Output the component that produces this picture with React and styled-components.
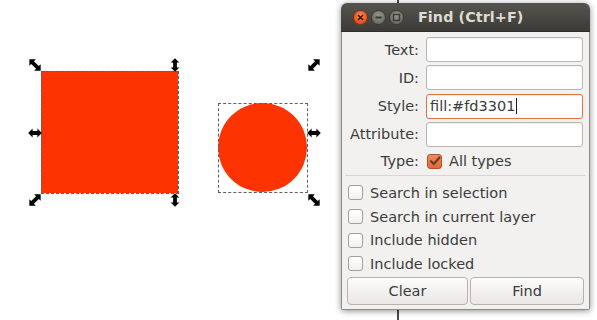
import React from "react";
import styled, { createGlobalStyle } from "styled-components";

const GlobalStyle = createGlobalStyle`
  html, body {
    margin: 0;
    padding: 0;
    background: #ffffff;
    overflow: hidden;
  }
  * {
    box-sizing: border-box;
  }
`;

const UI_FONT = `"DejaVu Sans", "Liberation Sans", sans-serif`;

const Stage = styled.div`
  position: relative;
  width: 597px;
  height: 320px;
  background: #ffffff;
  overflow: hidden;
  font-family: ${UI_FONT};
`;

// canvas objects, placed at their own coordinates
const Shape = styled.div`
  position: absolute;
  left: ${(p) => p.x}px;
  top: ${(p) => p.y}px;
  width: ${(p) => p.w}px;
  height: ${(p) => p.h}px;
  background: #fd3301;
  border-radius: ${(p) => (p.round ? "50%" : "0")};
`;

const BBox = styled.div`
  position: absolute;
  left: ${(p) => p.x}px;
  top: ${(p) => p.y}px;
  width: ${(p) => p.w}px;
  height: ${(p) => p.h}px;
  border: 1px dashed #5f5f6b;
`;

const HandleBox = styled.div`
  position: absolute;
  left: ${(p) => p.cx - 9}px;
  top: ${(p) => p.cy - 9}px;
  width: 18px;
  height: 18px;
  svg {
    display: block;
    transform: rotate(${(p) => p.angle}deg);
  }
`;

const PageEdge = styled.div`
  position: absolute;
  left: 397px;
  top: 0;
  width: 2px;
  height: 320px;
  background: #4a4a4a;
`;

// double arrow; diagonal ones are a bit longer, like Inkscape's
const Handle = ({ cx, cy, angle }) => {
  const diag = angle % 90 !== 0;
  const half = diag ? 8 : 6.8;
  const a = 9 - half;
  const b = 9 + half;
  const head = diag ? 4.6 : 4.4;
  return (
    <HandleBox cx={cx} cy={cy} angle={angle}>
      <svg width="18" height="18" viewBox="0 0 18 18">
        <polygon
          points={`${a},9 ${a + head},${9 - head} ${a + head},7.1 ${b - head},7.1 ${b - head},${9 - head} ${b},9 ${b - head},${9 + head} ${b - head},10.9 ${a + head},10.9 ${a + head},${9 + head}`}
          fill="#000"
        />
      </svg>
    </HandleBox>
  );
};

// the Find dialog window
const Window = styled.div`
  position: absolute;
  left: 341px;
  top: 3px;
  width: 249px;
  height: 307px;
  display: flex;
  flex-direction: column;
  border-radius: 6px 6px 2px 2px;
  box-shadow: 0 1px 6px rgba(0, 0, 0, 0.45);
  overflow: hidden;
`;

const TitleBar = styled.div`
  height: 29px;
  flex: none;
  display: flex;
  align-items: center;
  padding-left: 12px;
  background: linear-gradient(#55544f, #3c3b37);
  border-bottom: 1px solid #2f2e2b;
`;

const WinButtons = styled.div`
  display: flex;
  gap: 3px;
`;

const WinButton = styled.div`
  width: 15px;
  height: 15px;
  border-radius: 50%;
  display: flex;
  align-items: center;
  justify-content: center;
  border: 1px solid ${(p) => (p.close ? "#8a3212" : "#3a3935")};
  background: ${(p) =>
    p.close
      ? "radial-gradient(circle at 50% 35%, #f88a5b, #e4521c 70%)"
      : "radial-gradient(circle at 50% 35%, #96948e, #6f6d68 70%)"};
`;

const Title = styled.div`
  margin-left: 14px;
  color: #dfdbd2;
  font-weight: bold;
  font-size: 14.3px;
  letter-spacing: 0.1px;
`;

const Body = styled.div`
  flex: 1;
  display: flex;
  flex-direction: column;
  background: #f2f1f0;
  border: 1px solid #8e8b86;
  border-top: none;
  color: #3c3c3c;
  font-size: 14.5px;
`;

const Form = styled.div`
  display: grid;
  grid-template-columns: 71px 1fr;
  column-gap: 7px;
  row-gap: 3.3px;
  padding: 5px 6px 0 6px;
  align-items: center;
`;

const Label = styled.div`
  text-align: right;
  white-space: nowrap;
`;

const Entry = styled.div`
  height: 25px;
  display: flex;
  align-items: center;
  padding-left: 3px;
  background: #ffffff;
  border-radius: 3px;
  border: 1px solid ${(p) => (p.focused ? "#e4713f" : "#b9b6b0")};
  box-shadow: inset 0 1px 1px rgba(0, 0, 0, 0.06);
  white-space: nowrap;
`;

const Caret = styled.span`
  display: inline-block;
  width: 1px;
  height: 16px;
  margin-left: 1px;
  background: #1a1a1a;
`;

const TypeRow = styled.div`
  height: 22px;
  display: flex;
  align-items: center;
  gap: 7px;
  padding-left: 1px;
`;

const Box = styled.div`
  width: 15px;
  height: 15px;
  flex: none;
  border-radius: 3px;
  display: flex;
  align-items: center;
  justify-content: center;
  border: 1px solid ${(p) => (p.checked ? "#b5532a" : "#a29f9a")};
  background: ${(p) =>
    p.checked
      ? "linear-gradient(#f08a5d, #e0683a)"
      : "linear-gradient(#ffffff, #f1f0ee)"};
`;

const Separator = styled.div`
  height: 1px;
  margin: 3px 4px 5px 3px;
  background: #d9d6d1;
`;

const Options = styled.div`
  display: flex;
  flex-direction: column;
  padding: 0 6px;
`;

const OptionRow = styled.div`
  height: 23.6px;
  display: flex;
  align-items: center;
  gap: 7px;
`;

const Actions = styled.div`
  display: grid;
  grid-template-columns: 121px 1fr;
  gap: 2px;
  padding: 1.5px 5px 0 5px;
`;

const Button = styled.div`
  height: 28px;
  display: flex;
  align-items: center;
  justify-content: center;
  border: 1px solid #b7b3ac;
  border-radius: 4px;
  background: linear-gradient(#fcfcfb, #e9e7e4);
  box-shadow: inset 0 1px 0 #ffffff;
  color: #3c3c3c;
`;

const Check = ({ checked }) => (
  <Box checked={checked}>
    {checked && (
      <svg width="12" height="12" viewBox="0 0 12 12">
        <path
          d="M2 6.2 L4.8 9 L10.5 2.5"
          fill="none"
          stroke="#6a3a28"
          strokeWidth="2.2"
          strokeLinecap="round"
          strokeLinejoin="round"
        />
      </svg>
    )}
  </Box>
);

const fields = [
  { label: "Text:", value: "" },
  { label: "ID:", value: "" },
  { label: "Style:", value: "fill:#fd3301", focused: true },
  { label: "Attribute:", value: "" },
];

const options = [
  "Search in selection",
  "Search in current layer",
  "Include hidden",
  "Include locked",
];

const handles = [
  { cx: 34.5, cy: 64.5, angle: 45 },
  { cx: 174.5, cy: 64.5, angle: 90 },
  { cx: 313.5, cy: 64.5, angle: -45 },
  { cx: 34.5, cy: 132.5, angle: 0 },
  { cx: 313.5, cy: 132.5, angle: 0 },
  { cx: 34.5, cy: 199.5, angle: -45 },
  { cx: 174.5, cy: 199.5, angle: 90 },
  { cx: 313.5, cy: 199.5, angle: 45 },
];

export default function App() {
  return (
    <Stage>
      <GlobalStyle />
      <Shape x={41} y={71} w={137} h={122} />
      <BBox x={41} y={71} w={138} h={123} />
      <Shape x={218} y={103} w={89} h={89} round />
      <BBox x={218} y={103} w={90} h={90} />
      {handles.map((h, i) => (
        <Handle key={i} {...h} />
      ))}
      <PageEdge />

      <Window>
        <TitleBar>
          <WinButtons>
            <WinButton close>
              <svg width="9" height="9" viewBox="0 0 9 9">
                <path d="M2 2 L7 7 M7 2 L2 7" stroke="#3a1a0e" strokeWidth="1.6" />
              </svg>
            </WinButton>
            <WinButton>
              <svg width="9" height="9" viewBox="0 0 9 9">
                <path d="M1.5 4.5 H7.5" stroke="#3c3b37" strokeWidth="1.8" />
              </svg>
            </WinButton>
            <WinButton>
              <svg width="9" height="9" viewBox="0 0 9 9">
                <rect x="1.5" y="1.5" width="6" height="6" fill="none" stroke="#3c3b37" strokeWidth="1.4" />
              </svg>
            </WinButton>
          </WinButtons>
          <Title>Find (Ctrl+F)</Title>
        </TitleBar>

        <Body>
          <Form>
            {fields.map((f) => (
              <React.Fragment key={f.label}>
                <Label>{f.label}</Label>
                <Entry focused={f.focused}>
                  {f.value}
                  {f.focused && <Caret />}
                </Entry>
              </React.Fragment>
            ))}
            <Label>Type:</Label>
            <TypeRow>
              <Check checked />
              All types
            </TypeRow>
          </Form>

          <Separator />

          <Options>
            {options.map((o) => (
              <OptionRow key={o}>
                <Check />
                {o}
              </OptionRow>
            ))}
          </Options>

          <Actions>
            <Button>Clear</Button>
            <Button>Find</Button>
          </Actions>
        </Body>
      </Window>
    </Stage>
  );
}
